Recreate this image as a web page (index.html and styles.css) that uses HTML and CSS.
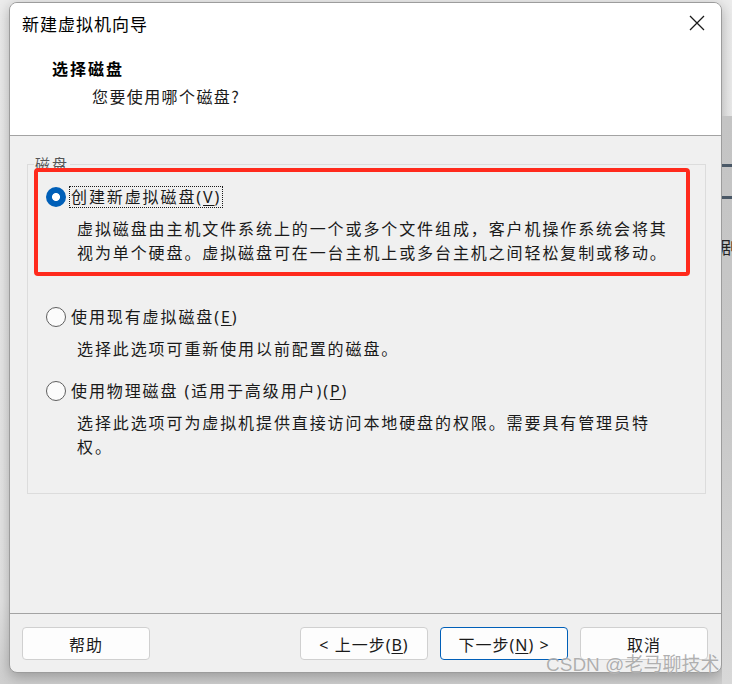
FILE: index.html
```html
<!DOCTYPE html>
<html lang="zh-CN">
<head>
<meta charset="utf-8">
<title>新建虚拟机向导</title>
<link rel="stylesheet" href="styles.css">
</head>
<body>
<div class="desktop">
  <div class="behind">
    <div class="behind-bar bar1"></div>
    <div class="behind-bar bar2"></div>
    <div class="behind-text">剧</div>
  </div>
  <div class="dialog">
    <div class="header">
      <div class="titlebar">
        <span class="title">新建虚拟机向导</span>
        <svg class="close" width="16" height="16" viewBox="0 0 16 16"><path d="M1 1 L15 15 M15 1 L1 15" stroke="#1a1a1a" stroke-width="1.3" fill="none"/></svg>
      </div>
      <div class="heading">选择磁盘</div>
      <div class="subheading">您要使用哪个磁盘?</div>
    </div>
    <div class="body">
      <div class="group">
        <span class="legend">磁盘</span>
        <div class="option opt1">
          <span class="radio checked"></span>
          <span class="label focus">创建新虚拟磁盘(<u>V</u>)</span>
        </div>
        <div class="desc">虚拟磁盘由主机文件系统上的一个或多个文件组成，客户机操作系统会将其<br>视为单个硬盘。虚拟磁盘可在一台主机上或多台主机之间轻松复制或移动。</div>
        <div class="option opt2">
          <span class="radio"></span>
          <span class="label">使用现有虚拟磁盘(<u>E</u>)</span>
        </div>
        <div class="desc">选择此选项可重新使用以前配置的磁盘。</div>
        <div class="option opt3">
          <span class="radio"></span>
          <span class="label">使用物理磁盘 (适用于高级用户)(<u>P</u>)</span>
        </div>
        <div class="desc">选择此选项可为虚拟机提供直接访问本地硬盘的权限。需要具有管理员特<br>权。</div>
        <div class="highlight"></div>
      </div>
    </div>
    <div class="footer">
      <button class="btn">帮助</button>
      <div class="spacer"></div>
      <button class="btn">&lt; 上一步(<u>B</u>)</button>
      <button class="btn primary">下一步(<u>N</u>) &gt;</button>
      <button class="btn">取消</button>
    </div>
  </div>
  <div class="watermark">CSDN @老马聊技术</div>
</div>
</body>
</html>
```
FILE: styles.css
```css
* { box-sizing: border-box; }
html, body { margin: 0; padding: 0; }
body {
  width: 732px;
  height: 684px;
  overflow: hidden;
  background: #e4e4e4;
  font-family: "Noto Sans", "Noto Sans CJK SC", sans-serif;
  color: #1a1a1a;
}
.desktop {
  position: relative;
  width: 732px;
  height: 684px;
  padding: 2px 0 0 9px;
  background: linear-gradient(to bottom, #ececec 0, #e4e4e4 600px, #cfcfcf 684px);
}
.behind {
  position: absolute;
  left: 722px;
  top: 116px;
  width: 10px;
  height: 568px;
  background: linear-gradient(to bottom, #c4c4c4 0, #c8c8c8 300px, #d8d8d8 568px);
  overflow: hidden;
}
.behind-bar {
  position: absolute;
  left: 0;
  width: 10px;
  height: 3px;
  background: #4a5866;
}
.bar1 { top: 48px; }
.bar2 { top: 80px; }
.behind-text {
  position: absolute;
  left: -2px;
  top: 118px;
  font-family: "Noto Sans CJK SC", sans-serif;
  font-size: 17px;
  color: #222;
}
.dialog {
  width: 713px;
  height: 671px;
  border: 1px solid #9c9c9c;
  border-radius: 8px;
  background: #f0f0f0;
  overflow: hidden;
  display: flex;
  flex-direction: column;
  box-shadow: 0 4px 14px rgba(0, 0, 0, 0.28);
}
.header {
  height: 133px;
  background: #ffffff;
  border-bottom: 1px solid #a3a3a3;
  flex: none;
}
.titlebar {
  height: 40px;
  display: flex;
  align-items: center;
  justify-content: space-between;
  padding: 0 16px 0 12px;
}
.title {
  font-family: "Noto Sans CJK SC", sans-serif;
  font-size: 17px;
  letter-spacing: 1px;
  color: #000;
}
.close { display: block; }
.heading {
  margin: 14px 0 0 42px;
  font-family: "Noto Sans CJK SC", sans-serif;
  font-weight: bold;
  font-size: 16px;
  letter-spacing: 2px;
  line-height: 22px;
  color: #000;
}
.subheading {
  margin: 6px 0 0 82px;
  font-family: "Noto Sans CJK SC", sans-serif;
  font-size: 16px;
  letter-spacing: 1.4px;
  line-height: 22px;
  color: #1a1a1a;
}
.body {
  flex: 1;
  padding: 28px 0 0 17px;
}
.group {
  position: relative;
  width: 679px;
  height: 330px;
  border: 1px solid #dcdcdc;
  padding: 22px 0 0 18px;
}
.legend {
  position: absolute;
  left: 6px;
  top: -10px;
  padding: 0 1px;
  background: #f0f0f0;
  font-family: "Noto Sans CJK SC", sans-serif;
  font-size: 15px;
  line-height: 18px;
  letter-spacing: 2px;
  color: #555;
}
.option {
  display: flex;
  align-items: center;
  height: 20px;
}
.opt2 { margin-top: 42px; }
.opt3 { margin-top: 20px; }
.radio {
  width: 20px;
  height: 20px;
  border-radius: 50%;
  border: 1px solid #5f5f5f;
  background: #fbfbfb;
  flex: none;
}
.radio.checked {
  border: none;
  background: radial-gradient(circle, #ffffff 0, #ffffff 3.6px, #005fb8 4.4px);
}
.label {
  margin-left: 3px;
  padding: 0 1px 0 1px;
  font-size: 16px;
  letter-spacing: 1.9px;
  line-height: 20px;
  border: 1px solid transparent;
  color: #1a1a1a;
}
.label.focus { border: 1px dotted #1a1a1a; }
.desc {
  margin: 10px 0 0 31px;
  font-size: 16px;
  letter-spacing: 1.9px;
  line-height: 24px;
  color: #1a1a1a;
}
u { text-decoration-thickness: 1px; text-underline-offset: 2px; }
.highlight {
  position: absolute;
  left: 6px;
  top: 3px;
  width: 656px;
  height: 108px;
  border: 4px solid #ff2a1c;
  border-radius: 4px;
  pointer-events: none;
}
.footer {
  height: 59px;
  flex: none;
  border-top: 1px solid #a3a3a3;
  display: flex;
  align-items: flex-start;
  padding: 13px 13px 0 12px;
  gap: 12px;
}
.spacer { flex: 1; }
.btn {
  width: 128px;
  height: 33px;
  background: #fdfdfd;
  border: 1px solid #d0d0d0;
  border-radius: 4px;
  font-family: "Noto Sans", "Noto Sans CJK SC", sans-serif;
  font-size: 16px;
  letter-spacing: 1px;
  color: #1a1a1a;
  padding: 0;
}
.btn.primary { border: 1px solid #005fb8; }
.watermark {
  position: absolute;
  left: 546px;
  top: 652px;
  font-family: "Liberation Sans", "Noto Sans CJK SC", sans-serif;
  font-size: 19px;
  line-height: 26px;
  color: rgba(150, 150, 150, 0.75);
  text-shadow: 0 0 1px rgba(255,255,255,0.8);
  white-space: nowrap;
}
```
